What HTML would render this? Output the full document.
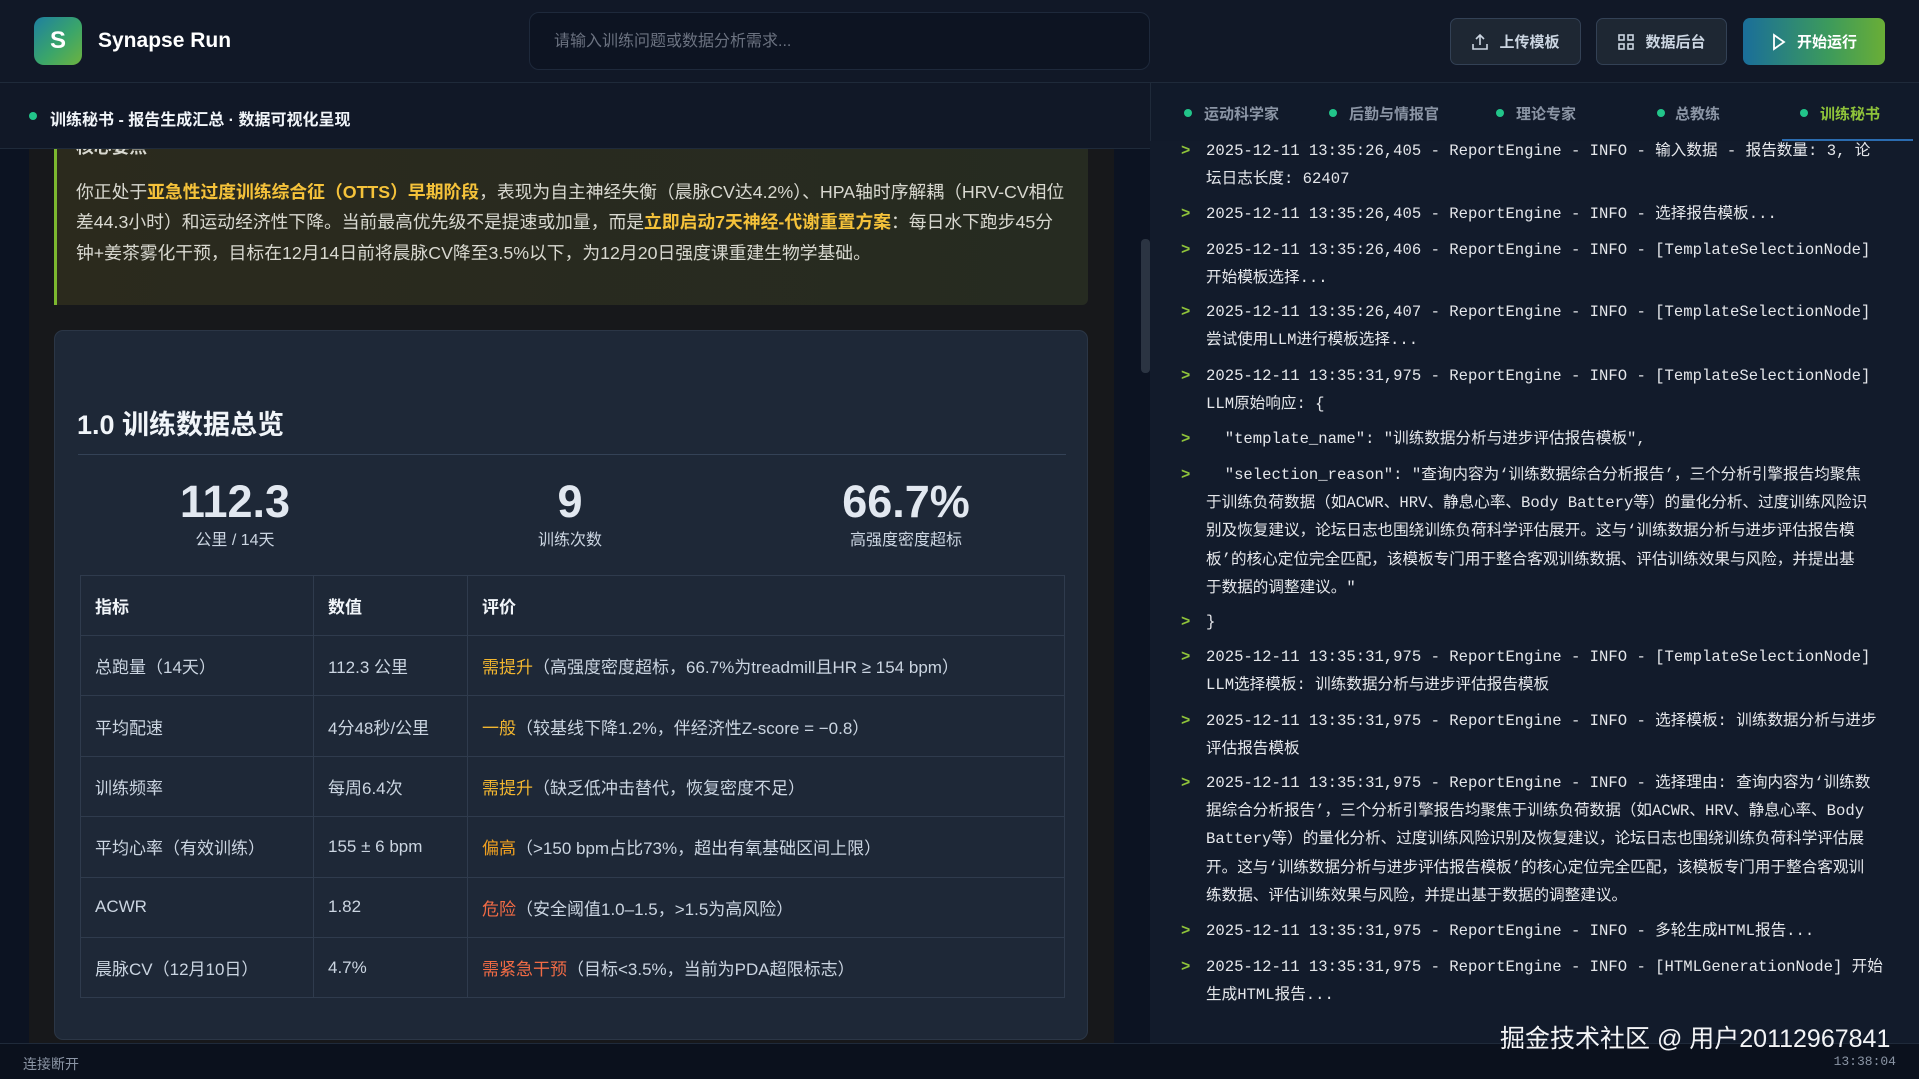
<!DOCTYPE html>
<html><head><meta charset="utf-8"><style>
*{margin:0;padding:0;box-sizing:border-box}
body{width:1919px;height:1079px;overflow:hidden;background:#0f1623;font-family:"Liberation Sans","Noto Sans CJK SC",sans-serif;color:#e5e7eb;position:relative}
.abs{position:absolute}
#hdr{left:0;top:0;width:1919px;height:83px;background:#111827;border-bottom:1px solid #1f2a3a}
.logo{left:34px;top:17px;width:48px;height:48px;border-radius:10px;background:linear-gradient(135deg,#1e7fa0,#3aa56a 55%,#6db33f);color:#fff;font-weight:bold;font-size:24px;text-align:center;line-height:48px}
.brand{left:98px;top:29px;font-size:21px;font-weight:bold;color:#fff}
.search{left:529px;top:12px;width:621px;height:58px;background:#0d1422;border:1px solid #1e293b;border-radius:10px;color:#6b7280;font-size:16px;line-height:58px;padding-left:24px}
.btn{top:18px;height:47px;border-radius:7px;background:#1e2733;border:1px solid #334155;color:#cbd5e1;font-size:15px;font-weight:bold;display:flex;align-items:center;justify-content:center;gap:10px}
.run{background:linear-gradient(90deg,#1a6e9a,#3c9a5c 60%,#6aae36);border:none;color:#fff}
#sub{left:0;top:83px;width:1150px;height:66px;background:#111827;border-bottom:1px solid #1f2a3a}
.dot{width:8px;height:8px;border-radius:50%;background:#22c58a;position:absolute}
#left{left:0;top:149px;width:1150px;height:894px;background:#0c1322}
#scroll{left:29px;top:0;width:1085px;height:894px;background:#17181b;overflow:hidden}
.callout{left:25px;top:-60px;width:1034px;height:216px;background:linear-gradient(90deg,#2b2a1d,#262b21);border-left:3px solid #7cb82f;border-radius:0 6px 6px 0;font-size:17.8px;color:#d8d8d0}
.callout .l{position:absolute;left:19px;white-space:nowrap}
.hl{color:#f5c23a;font-weight:bold}
.card{left:25px;top:181px;width:1034px;height:710px;background:#1e2837;border:1px solid #2b3646;border-radius:9px}
.card h2{position:absolute;left:22px;top:72px;font-size:27px;color:#f1f5f9}
.div{position:absolute;left:23px;top:123px;width:988px;height:1px;background:#344256}
.stat{position:absolute;width:300px;text-align:center}
.stat b{display:block;font-size:45px;color:#e2e8f0;line-height:48px}
.stat span{font-size:16px;color:#cbd5e1}
table{position:absolute;left:25px;top:244px;width:985px;border-collapse:collapse;font-size:17px;color:#cbd5e1}
td,th{border:1px solid #2f3b4d;height:60.4px;padding-left:14px;text-align:left;white-space:nowrap}
th{font-weight:bold;color:#f1f5f9;height:60px}
.y{color:#f2b630}.r{color:#f26b45}
.sb{left:1141px;top:90px;width:9px;height:134px;background:#2b3442;border-radius:4px}
#right{left:1150px;top:83px;width:769px;height:960px;background:#111a2a;border-left:1px solid #1f2a3a}
.tab{position:absolute;top:20px;font-size:15px;font-weight:bold;color:#8b95a5}
.ul{left:1782px;top:139px;width:131px;height:3px;background:#2b6cb0}
#log{left:1150px;top:141px;width:769px;height:902px;background:#121b2b;overflow:hidden;font-family:"Liberation Mono","Noto Sans CJK SC",monospace;font-size:15.6px;color:#e5e7eb}
.e{position:absolute;left:0;white-space:nowrap;line-height:28.2px}
.e i{position:absolute;left:31px;font-style:normal;color:#8fc33a;font-weight:bold}
.e div{padding-left:56px}
#status{left:0;top:1043px;width:1919px;height:36px;background:#0b111d;border-top:1px solid #1f2a3a;font-size:14px;color:#8b95a5}
.wm{left:1500px;top:1019px;font-size:25px;color:#f3f4f6;white-space:nowrap}
</style></head><body>
<div id="hdr" class="abs">
<div class="abs logo">S</div><div class="abs brand">Synapse Run</div>
<div class="abs search">请输入训练问题或数据分析需求...</div>
<div class="abs btn" style="left:1450px;width:131px"><svg width="18" height="18" viewBox="0 0 18 18" fill="none" stroke="#cbd5e1" stroke-width="1.6"><path d="M9 12V2M5 6l4-4 4 4M2 11v5h14v-5"/></svg>上传模板</div>
<div class="abs btn" style="left:1596px;width:131px"><svg width="18" height="18" viewBox="0 0 18 18" fill="none" stroke="#cbd5e1" stroke-width="1.6"><rect x="2" y="2" width="5" height="5"/><rect x="11" y="2" width="5" height="5"/><rect x="2" y="11" width="5" height="5"/><rect x="11" y="11" width="5" height="5"/></svg>数据后台</div>
<div class="abs btn run" style="left:1743px;width:142px"><svg width="16" height="18" viewBox="0 0 16 18" fill="none" stroke="#fff" stroke-width="1.8"><path d="M3 2l10 7-10 7z"/></svg>开始运行</div>
</div>
<div id="left" class="abs">
<div id="scroll" class="abs">
<div class="abs callout">
<div class="l hl" style="top:44px;color:#d8d8d0">核心要点</div>
<div class="l" style="top:89px">你正处于<span class="hl">亚急性过度训练综合征（OTTS）早期阶段</span>，表现为自主神经失衡（晨脉CV达4.2%）、HPA轴时序解耦（HRV-CV相位</div>
<div class="l" style="top:119px">差44.3小时）和运动经济性下降。当前最高优先级不是提速或加量，而是<span class="hl">立即启动7天神经-代谢重置方案</span>：每日水下跑步45分</div>
<div class="l" style="top:150px">钟+姜茶雾化干预，目标在12月14日前将晨脉CV降至3.5%以下，为12月20日强度课重建生物学基础。</div>
</div>
<div class="abs card">
<h2>1.0 训练数据总览</h2><div class="div"></div>
<div class="stat" style="left:30px;top:147px"><b>112.3</b><span>公里 / 14天</span></div>
<div class="stat" style="left:365px;top:147px"><b>9</b><span>训练次数</span></div>
<div class="stat" style="left:701px;top:147px"><b>66.7%</b><span>高强度密度超标</span></div>
<table>
<tr><th style="width:233px">指标</th><th style="width:154px">数值</th><th>评价</th></tr>
<tr><td>总跑量（14天）</td><td>112.3 公里</td><td><span class="y">需提升</span>（高强度密度超标，66.7%为treadmill且HR ≥ 154 bpm）</td></tr>
<tr><td>平均配速</td><td>4分48秒/公里</td><td><span class="y">一般</span>（较基线下降1.2%，伴经济性Z-score = −0.8）</td></tr>
<tr><td>训练频率</td><td>每周6.4次</td><td><span class="y">需提升</span>（缺乏低冲击替代，恢复密度不足）</td></tr>
<tr><td>平均心率（有效训练）</td><td>155 ± 6 bpm</td><td><span class="y" style="color:#f0a020">偏高</span>（>150 bpm占比73%，超出有氧基础区间上限）</td></tr>
<tr><td>ACWR</td><td>1.82</td><td><span class="r">危险</span>（安全阈值1.0–1.5，>1.5为高风险）</td></tr>
<tr><td>晨脉CV（12月10日）</td><td>4.7%</td><td><span class="r">需紧急干预</span>（目标&lt;3.5%，当前为PDA超限标志）</td></tr>
</table>
</div>
</div>
<div class="abs sb"></div>
</div>
<div id="sub" class="abs"><div class="dot" style="left:29px;top:29px"></div><div class="abs" style="left:50px;top:23px;font-size:16px;font-weight:bold;color:#f1f5f9">训练秘书 - 报告生成汇总 · 数据可视化呈现</div></div>
<div id="right" class="abs">
<div class="dot" style="left:33px;top:26px"></div><div class="tab" style="left:53px">运动科学家</div>
<div class="dot" style="left:178px;top:26px"></div><div class="tab" style="left:198px">后勤与情报官</div>
<div class="dot" style="left:345px;top:26px"></div><div class="tab" style="left:365px">理论专家</div>
<div class="dot" style="left:506px;top:26px"></div><div class="tab" style="left:524px">总教练</div>
<div class="dot" style="left:649px;top:26px"></div><div class="tab" style="left:669px;color:#8fc33a">训练秘书</div>
</div>
<div class="abs ul"></div>
<div id="log" class="abs">
<div class="e" style="top:-4px"><i>&gt;</i><div>2025-12-11 13:35:26,405 - ReportEngine - INFO - 输入数据 - 报告数量: 3, 论</div><div>坛日志长度: 62407</div></div>
<div class="e" style="top:59px"><i>&gt;</i><div>2025-12-11 13:35:26,405 - ReportEngine - INFO - 选择报告模板...</div></div>
<div class="e" style="top:95px"><i>&gt;</i><div>2025-12-11 13:35:26,406 - ReportEngine - INFO - [TemplateSelectionNode]</div><div>开始模板选择...</div></div>
<div class="e" style="top:157px"><i>&gt;</i><div>2025-12-11 13:35:26,407 - ReportEngine - INFO - [TemplateSelectionNode]</div><div>尝试使用LLM进行模板选择...</div></div>
<div class="e" style="top:221px"><i>&gt;</i><div>2025-12-11 13:35:31,975 - ReportEngine - INFO - [TemplateSelectionNode]</div><div>LLM原始响应: {</div></div>
<div class="e" style="top:284px"><i>&gt;</i><div>&nbsp;&nbsp;"template_name": "训练数据分析与进步评估报告模板",</div></div>
<div class="e" style="top:320px"><i>&gt;</i><div>&nbsp;&nbsp;"selection_reason": "查询内容为‘训练数据综合分析报告’，三个分析引擎报告均聚焦</div><div>于训练负荷数据（如ACWR、HRV、静息心率、Body Battery等）的量化分析、过度训练风险识</div><div>别及恢复建议，论坛日志也围绕训练负荷科学评估展开。这与‘训练数据分析与进步评估报告模</div><div>板’的核心定位完全匹配，该模板专门用于整合客观训练数据、评估训练效果与风险，并提出基</div><div>于数据的调整建议。"</div></div>
<div class="e" style="top:467px"><i>&gt;</i><div>}</div></div>
<div class="e" style="top:502px"><i>&gt;</i><div>2025-12-11 13:35:31,975 - ReportEngine - INFO - [TemplateSelectionNode]</div><div>LLM选择模板: 训练数据分析与进步评估报告模板</div></div>
<div class="e" style="top:566px"><i>&gt;</i><div>2025-12-11 13:35:31,975 - ReportEngine - INFO - 选择模板: 训练数据分析与进步</div><div>评估报告模板</div></div>
<div class="e" style="top:628px"><i>&gt;</i><div>2025-12-11 13:35:31,975 - ReportEngine - INFO - 选择理由: 查询内容为‘训练数</div><div>据综合分析报告’，三个分析引擎报告均聚焦于训练负荷数据（如ACWR、HRV、静息心率、Body</div><div>Battery等）的量化分析、过度训练风险识别及恢复建议，论坛日志也围绕训练负荷科学评估展</div><div>开。这与‘训练数据分析与进步评估报告模板’的核心定位完全匹配，该模板专门用于整合客观训</div><div>练数据、评估训练效果与风险，并提出基于数据的调整建议。</div></div>
<div class="e" style="top:776px"><i>&gt;</i><div>2025-12-11 13:35:31,975 - ReportEngine - INFO - 多轮生成HTML报告...</div></div>
<div class="e" style="top:812px"><i>&gt;</i><div>2025-12-11 13:35:31,975 - ReportEngine - INFO - [HTMLGenerationNode] 开始</div><div>生成HTML报告...</div></div>
</div>
<div id="status" class="abs"><span class="abs" style="left:23px;top:10px">连接断开</span><span class="abs" style="right:23px;top:10px;font-family:'Liberation Mono',monospace;font-size:13px">13:38:04</span></div>
<div class="abs wm">掘金技术社区 @ 用户20112967841</div>
</body></html>
